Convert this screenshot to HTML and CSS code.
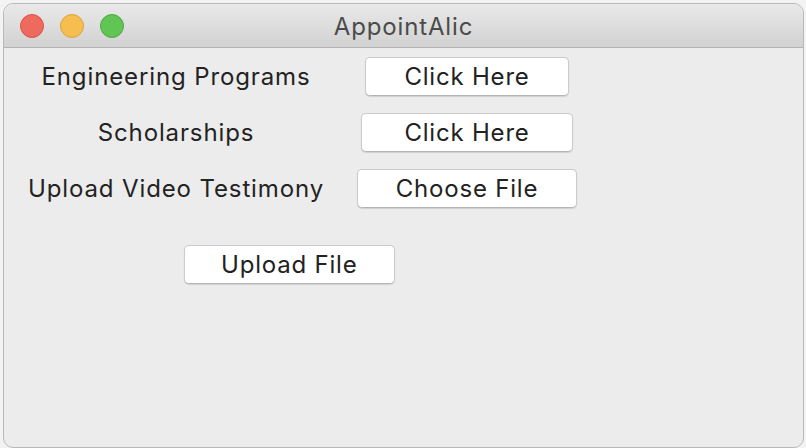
FILE: index.html
```html
<!DOCTYPE html>
<html lang="en">
<head>
<meta charset="utf-8">
<title>AppointAlic</title>
<link rel="stylesheet" href="styles.css">
</head>
<body>
<div class="desktop">
  <div class="window">
    <div class="titlebar">
      <div class="lights">
        <span class="light red"></span>
        <span class="light yellow"></span>
        <span class="light green"></span>
      </div>
      <div class="title">AppointAlic</div>
    </div>
    <div class="content">
      <div class="grid">
        <div class="label">Engineering Programs</div>
        <div class="cell"><button class="btn">Click Here</button></div>
        <div class="label">Scholarships</div>
        <div class="cell"><button class="btn btn-wide">Click Here</button></div>
        <div class="label">Upload Video Testimony</div>
        <div class="cell"><button class="btn">Choose File</button></div>
      </div>
      <div class="upload-row">
        <button class="btn btn-narrow">Upload File</button>
      </div>
    </div>
  </div>
</div>
</body>
</html>
```

FILE: styles.css
```css
html, body {
  margin: 0;
  padding: 0;
  width: 806px;
  height: 448px;
  overflow: hidden;
  background: #f3f3f3;
  font-family: Inter, "Liberation Sans", sans-serif;
}

.desktop {
  width: 806px;
  height: 448px;
  padding: 3px 0 0 3px;
  box-sizing: border-box;
}

.window {
  position: relative;
  width: 801px;
  height: 445px;
  box-sizing: border-box;
  border: 1px solid #b9b9b9;
  border-radius: 10px;
  background: #ececec;
  overflow: hidden;
  display: flex;
  flex-direction: column;
}

.titlebar {
  position: relative;
  height: 44px;
  flex: none;
  box-sizing: border-box;
  background: linear-gradient(#e9e9e9, #d2d2d2);
  border-bottom: 1px solid #b3b3b3;
  display: flex;
  align-items: center;
  justify-content: center;
}

.lights {
  position: absolute;
  left: 16px;
  top: 10px;
  display: flex;
  gap: 16px;
}

.light {
  width: 24px;
  height: 24px;
  border-radius: 50%;
  box-sizing: border-box;
}

.red { background: #ee6a5e; border: 1px solid #d9544a; }
.yellow { background: #f6be4f; border: 1px solid #dea33a; }
.green { background: #61c454; border: 1px solid #4caa40; }

.title {
  font-size: 24px;
  color: #4b4b4b;
  letter-spacing: 0.85px;
  margin-top: 1px;
}

.content {
  padding-top: 9px;
}

.grid {
  display: grid;
  grid-template-columns: 344px 238px;
  grid-auto-rows: 39px;
  row-gap: 17px;
  align-items: center;
  justify-items: center;
}

.label {
  font-size: 24px;
  color: #232323;
  letter-spacing: 0.88px;
}

.cell {
  display: flex;
  justify-content: center;
}

.btn {
  height: 39px;
  padding: 0 38px;
  box-sizing: border-box;
  font-family: inherit;
  font-size: 24px;
  letter-spacing: 0.8px;
  color: #222;
  background: #ffffff;
  border: 1px solid #cbcbcb;
  border-bottom-color: #b5b5b5;
  border-radius: 5px;
  box-shadow: 0 1px 1px rgba(0,0,0,0.12);
}

.btn-wide {
  padding: 0 42px;
}

.btn-narrow {
  padding: 0 36px;
}

.upload-row {
  margin-top: 37px;
  padding-left: 180px;
  display: flex;
}
```
